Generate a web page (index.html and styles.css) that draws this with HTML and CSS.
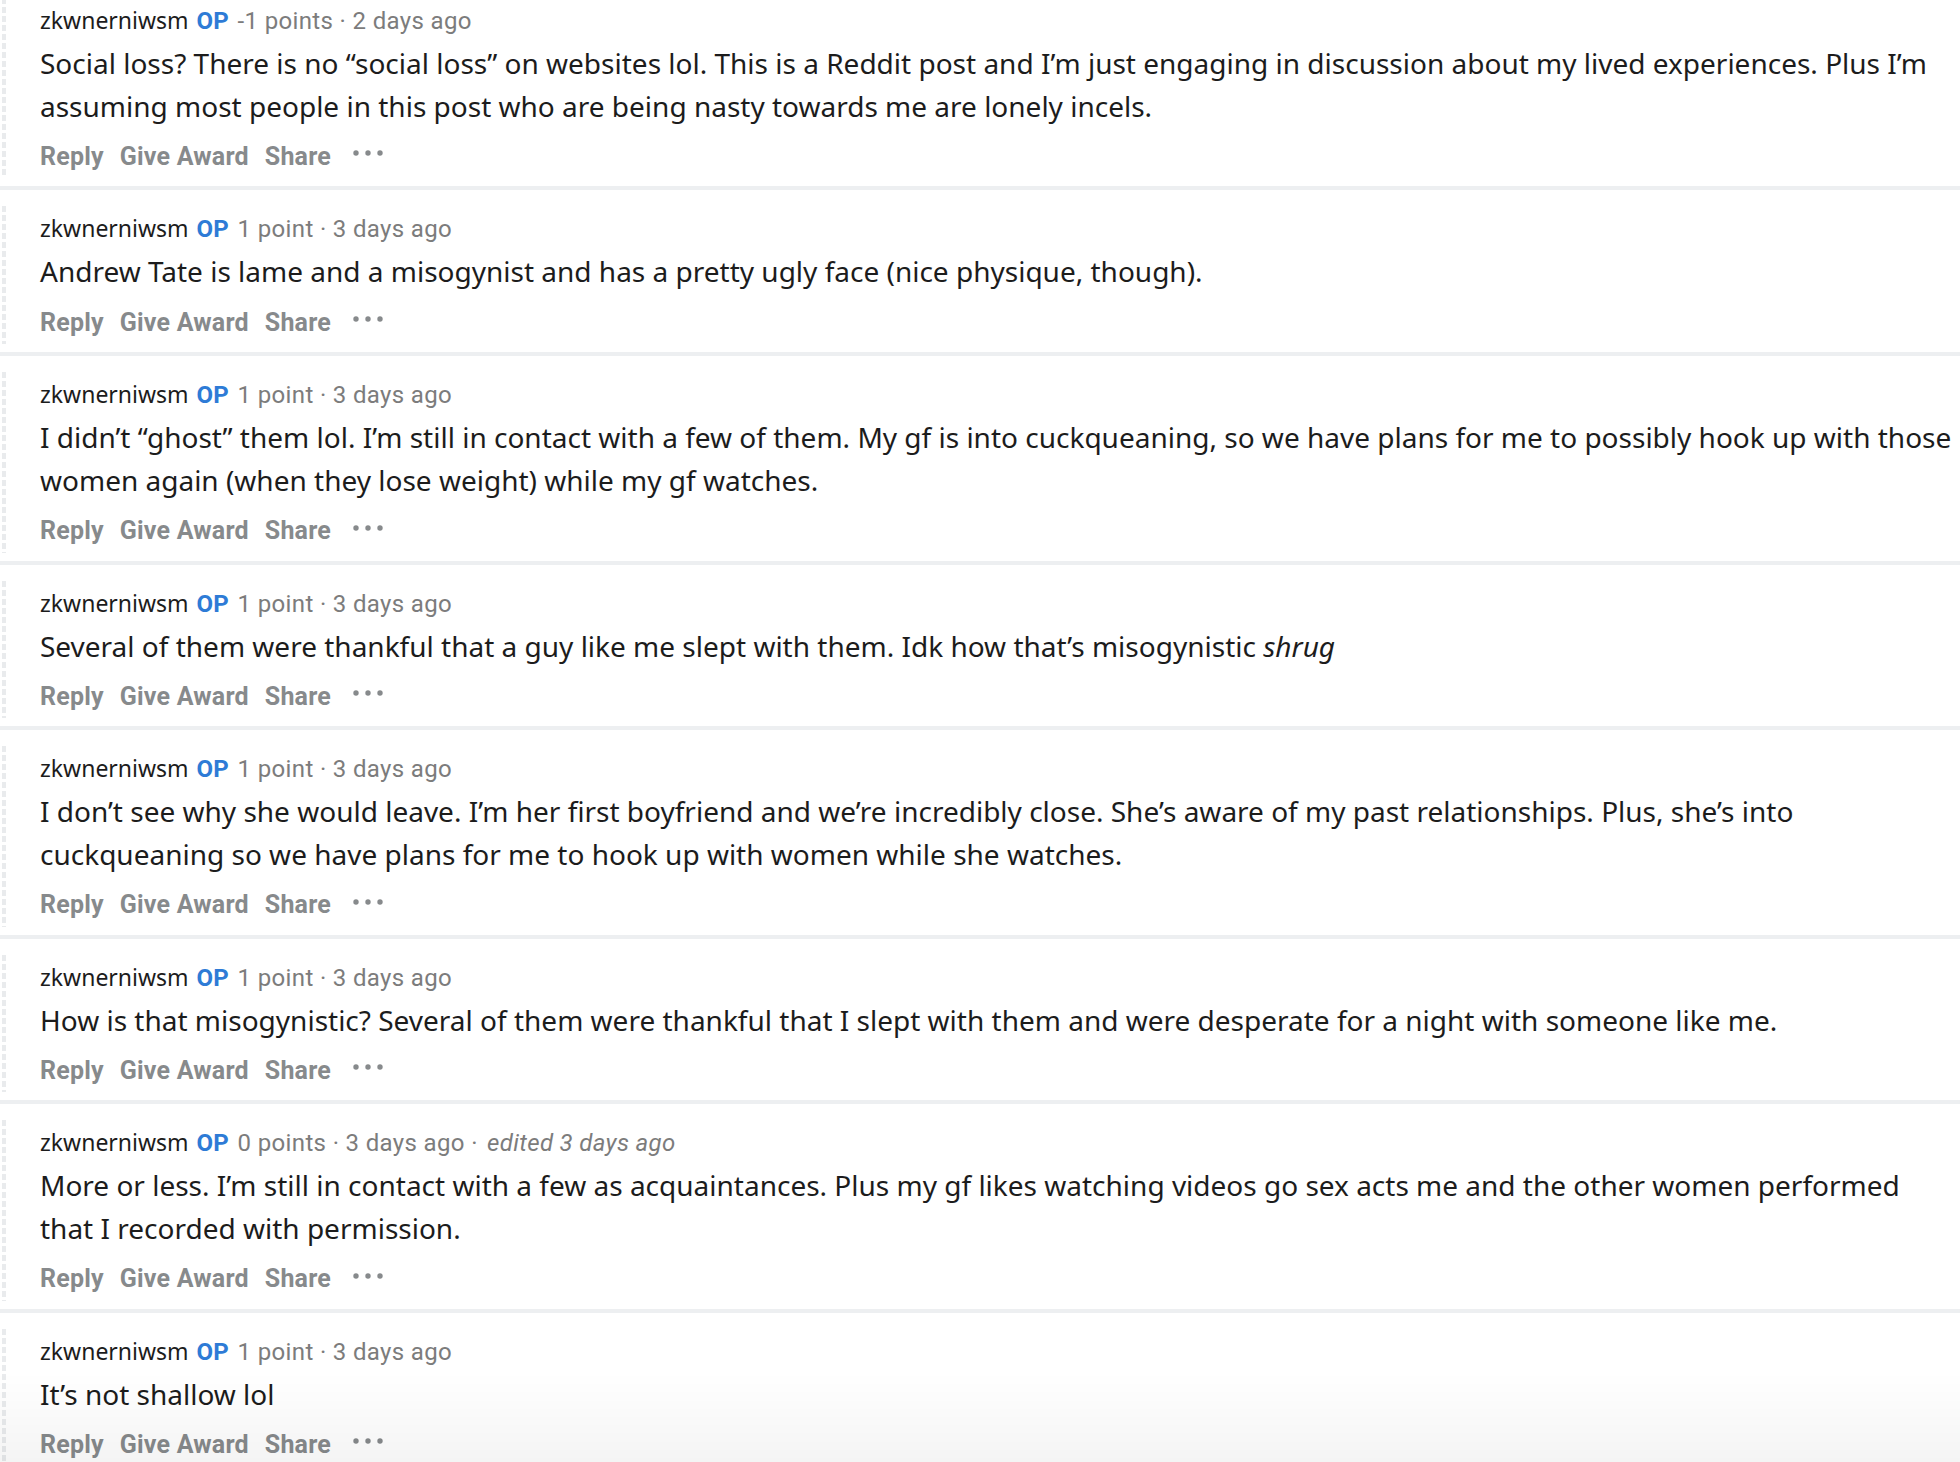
FILE: index.html
```html
<!DOCTYPE html>
<html lang="en">

<head>
    <meta charset="UTF-8">
    <title>Comments</title>
    <link rel="stylesheet" href="styles.css">
</head>

<body>
    <div class="comments">

        <div class="comment">
            <div class="thread"></div>
            <div class="content">
                <div class="meta">
                    <span class="author">zkwnerniwsm</span>
                    <span class="op">OP</span>
                    <span class="info">-1 points · 2 days ago</span>
                </div>
                <p class="text">Social loss? There is no “social loss” on websites lol. This is a Reddit post and I’m just engaging in discussion about my lived experiences. Plus I’m assuming most people in this post who are being nasty towards me are lonely incels.</p>
                <div class="actions">
                    <span>Reply</span><span>Give Award</span><span>Share</span>
                    <svg class="more" width="30" height="8" viewBox="0 0 30 8"><circle cx="3" cy="4" r="2.7"/><circle cx="15" cy="4" r="2.7"/><circle cx="27" cy="4" r="2.7"/></svg>
                </div>
            </div>
        </div>

        <div class="comment">
            <div class="thread"></div>
            <div class="content">
                <div class="meta">
                    <span class="author">zkwnerniwsm</span>
                    <span class="op">OP</span>
                    <span class="info">1 point · 3 days ago</span>
                </div>
                <p class="text">Andrew Tate is lame and a misogynist and has a pretty ugly face (nice physique, though).</p>
                <div class="actions">
                    <span>Reply</span><span>Give Award</span><span>Share</span>
                    <svg class="more" width="30" height="8" viewBox="0 0 30 8"><circle cx="3" cy="4" r="2.7"/><circle cx="15" cy="4" r="2.7"/><circle cx="27" cy="4" r="2.7"/></svg>
                </div>
            </div>
        </div>

        <div class="comment">
            <div class="thread"></div>
            <div class="content">
                <div class="meta">
                    <span class="author">zkwnerniwsm</span>
                    <span class="op">OP</span>
                    <span class="info">1 point · 3 days ago</span>
                </div>
                <p class="text">I didn’t “ghost” them lol. I’m still in contact with a few of them. My gf is into cuckqueaning, so we have plans for me to possibly hook up with those women again (when they lose weight) while my gf watches.</p>
                <div class="actions">
                    <span>Reply</span><span>Give Award</span><span>Share</span>
                    <svg class="more" width="30" height="8" viewBox="0 0 30 8"><circle cx="3" cy="4" r="2.7"/><circle cx="15" cy="4" r="2.7"/><circle cx="27" cy="4" r="2.7"/></svg>
                </div>
            </div>
        </div>

        <div class="comment">
            <div class="thread"></div>
            <div class="content">
                <div class="meta">
                    <span class="author">zkwnerniwsm</span>
                    <span class="op">OP</span>
                    <span class="info">1 point · 3 days ago</span>
                </div>
                <p class="text">Several of them were thankful that a guy like me slept with them. Idk how that’s misogynistic <em>shrug</em></p>
                <div class="actions">
                    <span>Reply</span><span>Give Award</span><span>Share</span>
                    <svg class="more" width="30" height="8" viewBox="0 0 30 8"><circle cx="3" cy="4" r="2.7"/><circle cx="15" cy="4" r="2.7"/><circle cx="27" cy="4" r="2.7"/></svg>
                </div>
            </div>
        </div>

        <div class="comment">
            <div class="thread"></div>
            <div class="content">
                <div class="meta">
                    <span class="author">zkwnerniwsm</span>
                    <span class="op">OP</span>
                    <span class="info">1 point · 3 days ago</span>
                </div>
                <p class="text">I don’t see why she would leave. I’m her first boyfriend and we’re incredibly close. She’s aware of my past relationships. Plus, she’s into cuckqueaning so we have plans for me to hook up with women while she watches.</p>
                <div class="actions">
                    <span>Reply</span><span>Give Award</span><span>Share</span>
                    <svg class="more" width="30" height="8" viewBox="0 0 30 8"><circle cx="3" cy="4" r="2.7"/><circle cx="15" cy="4" r="2.7"/><circle cx="27" cy="4" r="2.7"/></svg>
                </div>
            </div>
        </div>

        <div class="comment">
            <div class="thread"></div>
            <div class="content">
                <div class="meta">
                    <span class="author">zkwnerniwsm</span>
                    <span class="op">OP</span>
                    <span class="info">1 point · 3 days ago</span>
                </div>
                <p class="text">How is that misogynistic? Several of them were thankful that I slept with them and were desperate for a night with someone like me.</p>
                <div class="actions">
                    <span>Reply</span><span>Give Award</span><span>Share</span>
                    <svg class="more" width="30" height="8" viewBox="0 0 30 8"><circle cx="3" cy="4" r="2.7"/><circle cx="15" cy="4" r="2.7"/><circle cx="27" cy="4" r="2.7"/></svg>
                </div>
            </div>
        </div>

        <div class="comment">
            <div class="thread"></div>
            <div class="content">
                <div class="meta">
                    <span class="author">zkwnerniwsm</span>
                    <span class="op">OP</span>
                    <span class="info">0 points · 3 days ago · <em>edited 3 days ago</em></span>
                </div>
                <p class="text">More or less. I’m still in contact with a few as acquaintances. Plus my gf likes watching videos go sex acts me and the other women performed that I recorded with permission.</p>
                <div class="actions">
                    <span>Reply</span><span>Give Award</span><span>Share</span>
                    <svg class="more" width="30" height="8" viewBox="0 0 30 8"><circle cx="3" cy="4" r="2.7"/><circle cx="15" cy="4" r="2.7"/><circle cx="27" cy="4" r="2.7"/></svg>
                </div>
            </div>
        </div>

        <div class="comment">
            <div class="thread"></div>
            <div class="content">
                <div class="meta">
                    <span class="author">zkwnerniwsm</span>
                    <span class="op">OP</span>
                    <span class="info">1 point · 3 days ago</span>
                </div>
                <p class="text">It’s not shallow lol</p>
                <div class="actions">
                    <span>Reply</span><span>Give Award</span><span>Share</span>
                    <svg class="more" width="30" height="8" viewBox="0 0 30 8"><circle cx="3" cy="4" r="2.7"/><circle cx="15" cy="4" r="2.7"/><circle cx="27" cy="4" r="2.7"/></svg>
                </div>
            </div>
        </div>

    </div>

    <div class="fade"></div>
</body>

</html>
```

FILE: styles.css
```css
body {
    margin: 0;
    background: #ffffff;
    font-family: "Noto Sans", Arial, sans-serif;
    color: #1c1c1c;
    overflow: hidden;
}

.comments {
    margin-top: -18px;
}

.comment {
    display: flex;
    padding: 22px 0 10px 0;
    border-bottom: 4px solid #edeff1;
}

.thread {
    flex: 0 0 4px;
    margin: -6px 34px -2px 2px;
    background: repeating-linear-gradient(to bottom, #e9ebed 0, #e9ebed 6px, transparent 6px, transparent 9px);
}

.content {
    flex: 1;
    min-width: 0;
    padding-right: 6px;
}

.meta {
    height: 32px;
    line-height: 32px;
    font-size: 23px;
    white-space: nowrap;
}

.author {
    color: #1c1c1c;
}

.op {
    margin-left: 2px;
    font-family: Roboto, sans-serif;
    font-weight: 700;
    font-size: 24px;
    color: #2e7bd6;
}

.info {
    margin-left: 3px;
    font-family: Roboto, sans-serif;
    font-size: 24px;
    letter-spacing: 0.35px;
    color: #7c7c7c;
}

.info em {
    margin-left: 3px;
}

.text {
    margin: 6px 0 0 0;
    font-size: 28px;
    line-height: 42.7px;
}

.actions {
    display: flex;
    align-items: center;
    gap: 16px;
    height: 40px;
    margin-top: 9px;
    font-family: Roboto, sans-serif;
    font-weight: 700;
    font-size: 25px;
    letter-spacing: 0.2px;
    color: #878a8c;
}

.more {
    margin-left: 6px;
    fill: #878a8c;
    position: relative;
    top: -3px;
}

.fade {
    position: fixed;
    left: 0;
    right: 0;
    bottom: 0;
    height: 90px;
    background: linear-gradient(to bottom, rgba(0, 0, 0, 0), rgba(0, 0, 0, 0.045));
}
```
